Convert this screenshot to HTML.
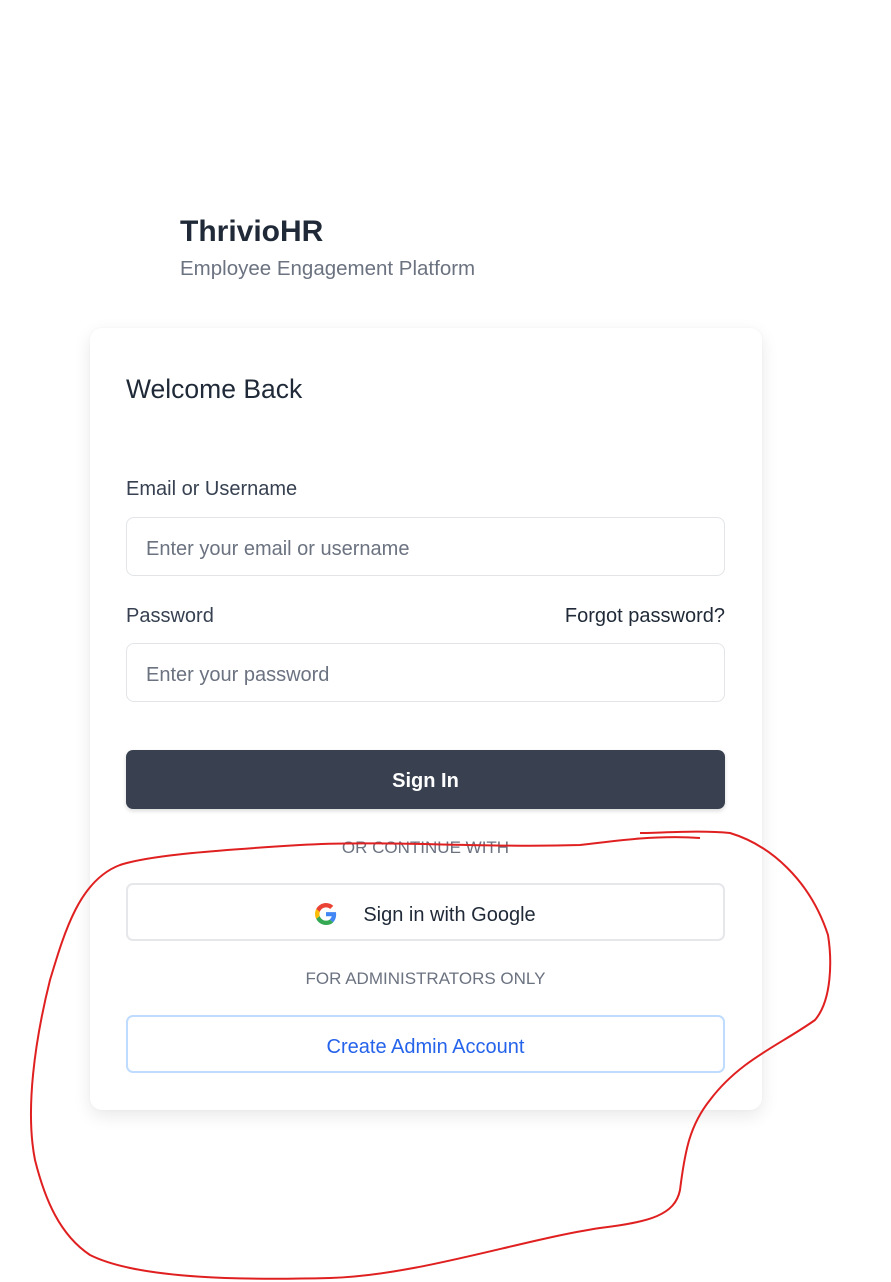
<!DOCTYPE html>
<html><head><meta charset="utf-8"><style>
body{margin:0;width:891px;height:1282px;background:#fff;font-family:"Liberation Sans",sans-serif;position:relative;overflow:hidden}
.abs{position:absolute}
.card{left:90px;top:328px;width:672px;height:782px;border-radius:12px;background:#fff;box-shadow:0 6px 18px rgba(0,0,0,.09),0 0 3px rgba(0,0,0,.03)}
.inp{left:126px;width:599px;height:59px;border:1px solid #e2e4e8;border-radius:8px;font-size:20px;color:#6b7280;box-sizing:border-box;padding-left:19px;line-height:62px}
.lbl{font-size:20px;color:#374151}
</style></head><body>
<div class="abs" style="left:180px;top:215px;font-size:30px;font-weight:bold;color:#1f2937">ThrivioHR</div>
<div class="abs" style="left:180px;top:257px;font-size:20.5px;color:#6b7280">Employee Engagement Platform</div>
<div class="abs card"></div>
<div class="abs" style="left:126px;top:374px;font-size:26.5px;color:#1f2937">Welcome Back</div>
<div class="abs lbl" style="left:126px;top:478px">Email or Username</div>
<div class="abs inp" style="top:517px">Enter your email or username</div>
<div class="abs lbl" style="left:126px;top:605px">Password</div>
<div class="abs lbl" style="right:166px;top:605px;color:#1f2937">Forgot password?</div>
<div class="abs inp" style="top:643px">Enter your password</div>
<div class="abs" style="left:126px;top:750px;width:599px;height:59px;background:#394150;border-radius:7px;color:#fff;font-size:20px;font-weight:bold;text-align:center;line-height:62px;box-shadow:0 2px 4px rgba(0,0,0,.15)">Sign In</div>
<div class="abs" style="left:126px;width:599px;top:838px;text-align:center;font-size:17px;color:#6b7280">OR CONTINUE WITH</div>
<div class="abs" style="left:126px;top:883px;width:599px;height:58px;box-sizing:border-box;border:2px solid #e5e7eb;border-radius:7px;text-align:center;line-height:60px;font-size:20px;color:#1f2937">
<svg width="22" height="22" viewBox="0 0 48 48" style="vertical-align:-4px;margin-right:26px"><path fill="#EA4335" d="M24 9.5c3.5 0 6.6 1.2 9.1 3.6l6.8-6.8C35.8 2.4 30.2 0 24 0 14.6 0 6.6 5.4 2.6 13.3l7.900 6.2C12.4 13.7 17.7 9.5 24 9.5z"/><path fill="#4285F4" d="M46.1 24.5c0-1.600-.1-3.1-.4-4.5H24v9h12.4c-.5 2.9-2.2 5.3-4.6 6.9l7.7 6c4.5-4.2 6.6-10.3 6.6-17.4z"/><path fill="#FBBC05" d="M10.5 28.6c-.5-1.4-.8-3-.8-4.600s.3-3.2.8-4.6l-7.9-6.2C.9 16.6 0 20.2 0 24s.9 7.4 2.6 10.8l7.9-6.2z"/><path fill="#34A853" d="M24 48c6.5 0 11.9-2.1 15.9-5.8l-7.7-6c-2.2 1.5-5 2.3-8.2 2.3-6.3 0-11.6-4.2-13.5-10l-7.9 6.2C6.600 42.6 14.6 48 24 48z"/></svg>Sign in with Google</div>
<div class="abs" style="left:126px;width:599px;top:969px;text-align:center;font-size:17px;color:#6b7280">FOR ADMINISTRATORS ONLY</div>
<div class="abs" style="left:126px;top:1015px;width:599px;height:58px;box-sizing:border-box;border:2px solid #bfdbfe;border-radius:7px;text-align:center;line-height:60px;font-size:20px;color:#2563eb">Create Admin Account</div>
<svg class="abs" style="left:0;top:0" width="891" height="1282"><path d="M700 838 C660 835 620 840 580 845 C480 848 380 840 300 845 C220 850 150 855 120 865 C80 880 65 930 50 980 C35 1040 25 1110 35 1160 C45 1200 60 1235 90 1255 C140 1280 250 1280 330 1278 C420 1275 520 1240 600 1228 C650 1222 675 1215 680 1190 C685 1150 690 1125 710 1100 C740 1060 780 1045 815 1020 C832 1000 832 960 828 935 C810 880 770 845 730 833 C700 830 660 833 640 833" fill="none" stroke="#e02020" stroke-width="2"/></svg>
</body></html>
